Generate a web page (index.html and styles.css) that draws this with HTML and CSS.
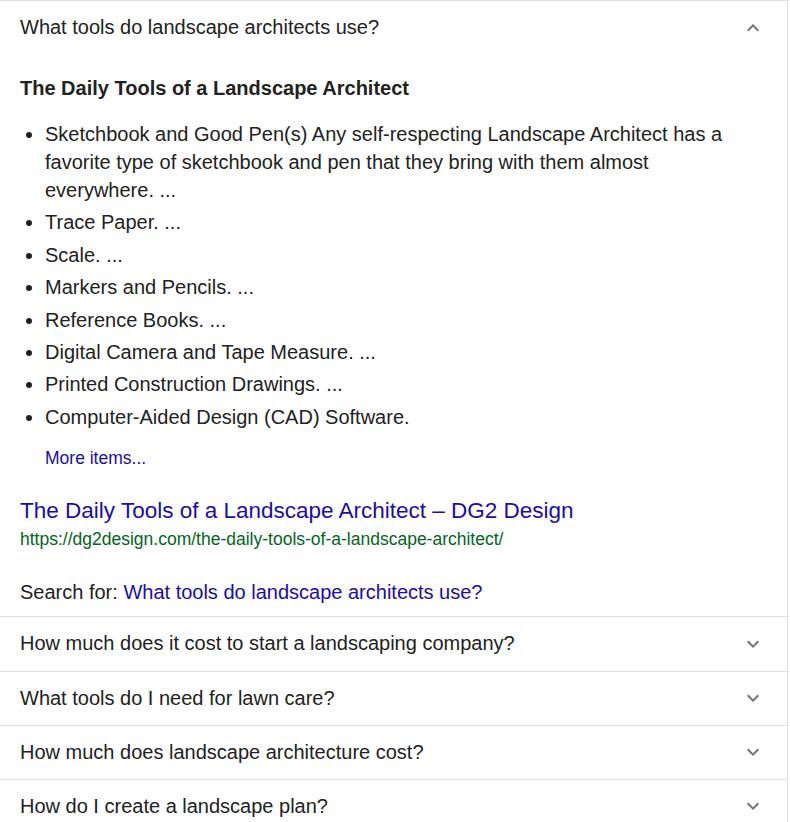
FILE: index.html
```html
<!DOCTYPE html>
<html>
<head>
<meta charset="utf-8">
<link rel="stylesheet" href="styles.css">
</head>
<body>
<div class="paa">
  <div class="item open">
    <div class="q">
      <span class="q-text">What tools do landscape architects use?</span>
      <svg class="chev" width="24" height="24" viewBox="0 0 24 24"><path d="M7.41 15.41L12 10.83l4.59 4.58L18 14l-6-6-6 6z"/></svg>
    </div>
    <div class="answer">
      <div class="a-head">The Daily Tools of a Landscape Architect</div>
      <ul class="a-list">
        <li>Sketchbook and Good Pen(s) Any self-respecting Landscape Architect has a favorite type of sketchbook and pen that they bring with them almost everywhere. ...</li>
        <li>Trace Paper. ...</li>
        <li>Scale. ...</li>
        <li>Markers and Pencils. ...</li>
        <li>Reference Books. ...</li>
        <li>Digital Camera and Tape Measure. ...</li>
        <li>Printed Construction Drawings. ...</li>
        <li>Computer-Aided Design (CAD) Software.</li>
      </ul>
      <a class="more" href="#">More items...</a>
      <a class="src-title" href="#">The Daily Tools of a Landscape Architect – DG2 Design</a>
      <div class="src-url">https://dg2design.com/the-daily-tools-of-a-landscape-architect/</div>
      <div class="search-for">Search for: <a href="#">What tools do landscape architects use?</a></div>
    </div>
  </div>
  <div class="item first-closed">
    <div class="q">
      <span class="q-text">How much does it cost to start a landscaping company?</span>
      <svg class="chev" width="24" height="24" viewBox="0 0 24 24"><path d="M7.41 8.59L12 13.17l4.59-4.58L18 10l-6 6-6-6z"/></svg>
    </div>
  </div>
  <div class="item">
    <div class="q">
      <span class="q-text">What tools do I need for lawn care?</span>
      <svg class="chev" width="24" height="24" viewBox="0 0 24 24"><path d="M7.41 8.59L12 13.17l4.59-4.58L18 10l-6 6-6-6z"/></svg>
    </div>
  </div>
  <div class="item">
    <div class="q">
      <span class="q-text">How much does landscape architecture cost?</span>
      <svg class="chev" width="24" height="24" viewBox="0 0 24 24"><path d="M7.41 8.59L12 13.17l4.59-4.58L18 10l-6 6-6-6z"/></svg>
    </div>
  </div>
  <div class="item">
    <div class="q">
      <span class="q-text">How do I create a landscape plan?</span>
      <svg class="chev" width="24" height="24" viewBox="0 0 24 24"><path d="M7.41 8.59L12 13.17l4.59-4.58L18 10l-6 6-6-6z"/></svg>
    </div>
  </div>
</div>
</body>
</html>
```

FILE: styles.css
```css
html, body {
  margin: 0;
  padding: 0;
  background: #fff;
}
body {
  font-family: "Liberation Sans", Arial, sans-serif;
  color: #222;
}
.paa {
  width: 787px;
  border-right: 1px solid #dfe1e5;
}
.item {
  border-top: 1px solid #dfe1e5;
}
.q {
  height: 53px;
  display: flex;
  align-items: center;
  justify-content: space-between;
  padding: 0 22px 0 20px;
  font-size: 20px;
}
.first-closed .q {
  height: 54px;
}
.chev {
  fill: #70757a;
}
.answer {
  padding: 0 40px 10px 20px;
}
.a-head {
  font-weight: bold;
  font-size: 20px;
  line-height: 24px;
  margin-top: 22px;
}
.a-list {
  margin: 20px 0 0 0;
  padding-left: 25px;
  font-size: 20px;
  line-height: 28px;
}
.a-list li {
  margin-bottom: 4.4px;
}
.more {
  display: block;
  margin: 15px 0 0 25px;
  font-size: 17.5px;
  line-height: 24px;
  color: #1a0dab;
  text-decoration: none;
}
.src-title {
  display: block;
  margin-top: 27px;
  font-size: 22.5px;
  line-height: 28px;
  color: #1a0dab;
  text-decoration: none;
}
.src-url {
  font-size: 17.5px;
  line-height: 28px;
  color: #006621;
}
.search-for {
  margin-top: 25px;
  font-size: 20px;
  line-height: 28px;
}
.search-for a {
  color: #1a0dab;
  text-decoration: none;
}
```
